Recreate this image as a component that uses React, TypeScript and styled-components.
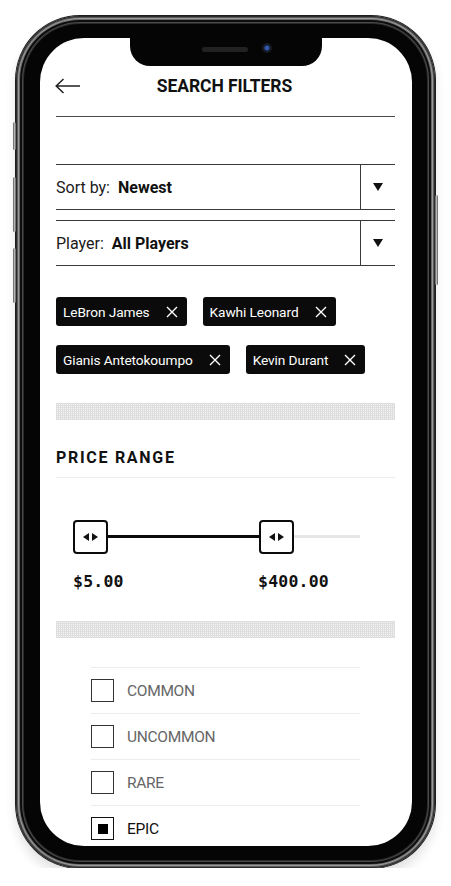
import React from "react";
import styled, { createGlobalStyle } from "styled-components";

const GlobalStyle = createGlobalStyle`
  html, body {
    margin: 0;
    padding: 0;
    background: #ffffff;
  }
  body {
    font-family: Roboto, "Liberation Sans", Arial, sans-serif;
    color: #111;
  }
`;

// Phone frame
const Phone = styled.div`
  position: relative;
  box-sizing: border-box;
  width: 419px;
  height: 852px;
  margin: 16px 0 0 16px;
  padding: 22px 23px 22px 24px;
  border-radius: 64px;
  background: #050505;
  box-shadow: inset 0 0 0 1px #2b2b2b, inset 0 0 0 2px #5a5a5a,
    inset 0 0 0 3px #9a9a9a, inset 0 0 0 4px #6a6a6a, inset 0 0 0 6px #0d0d0d,
    inset 0 0 0 7px #4a4a4a, inset 0 0 0 8px #2a2a2a, 0 0 0 1px #1e1e1e,
    0 8px 12px rgba(0, 0, 0, 0.12);
`;

const SideButton = styled.div<{ $side: "left" | "right"; $top: number; $h: number }>`
  position: absolute;
  ${(p) => (p.$side === "left" ? "left: -3px;" : "right: -3px;")}
  top: ${(p) => p.$top}px;
  width: 3px;
  height: ${(p) => p.$h}px;
  border-radius: 2px;
  background: linear-gradient(90deg, #555, #b5b5b5, #555);
`;

const Screen = styled.div`
  position: relative;
  height: 100%;
  border-radius: 44px;
  background: #fff;
  overflow: hidden;
`;

const Notch = styled.div`
  position: absolute;
  top: 0;
  left: 90px;
  width: 192px;
  height: 28px;
  background: #050505;
  border-radius: 0 0 20px 20px;
  z-index: 2;
`;

const Speaker = styled.div`
  position: absolute;
  top: 9px;
  left: 72px;
  width: 46px;
  height: 5px;
  border-radius: 3px;
  background: #222;
`;

const Camera = styled.div`
  position: absolute;
  top: 5px;
  left: 132px;
  width: 10px;
  height: 10px;
  border-radius: 50%;
  background: radial-gradient(circle at 50% 50%, #3556a8 0 2px, #111a2e 3px, #181818 5px);
`;

const Content = styled.div`
  padding: 0 17px 0 16px;
`;

// Header
const Header = styled.header`
  display: grid;
  grid-template-columns: 1fr auto 1fr;
  align-items: center;
  height: 36px;
  padding: 30px 0 12px;
  border-bottom: 1px solid #4a4a4a;
`;

const BackButton = styled.button`
  justify-self: start;
  display: flex;
  align-items: center;
  padding: 0;
  border: none;
  background: none;
  margin-left: -1px;
`;

const Title = styled.h1`
  margin: 0 0 0 -2px;
  font-size: 17.5px;
  font-weight: 700;
  letter-spacing: -0.1px;
  color: #111;
`;

// Dropdowns
const SelectBox = styled.div<{ $gap: number }>`
  display: flex;
  align-items: stretch;
  height: 44px;
  margin-top: ${(p) => p.$gap}px;
  border-top: 1px solid #3a3a3a;
  border-bottom: 1px solid #3a3a3a;
`;

const SelectLabel = styled.div`
  flex: 1;
  display: flex;
  align-items: center;
  font-size: 16px;
  color: #1a1a1a;
`;

const SelectValue = styled.strong`
  margin-left: 8px;
  font-weight: 700;
  color: #111;
`;

const SelectArrow = styled.div`
  width: 34px;
  display: flex;
  align-items: center;
  justify-content: center;
  border-left: 1px solid #3a3a3a;
`;

// Chips
const ChipList = styled.div`
  display: flex;
  flex-wrap: wrap;
  gap: 19px 16px;
  margin-top: 31px;
`;

const Chip = styled.div`
  display: flex;
  align-items: center;
  gap: 16px;
  height: 29px;
  padding: 0 9px 0 7px;
  border-radius: 3px;
  background: #0b0b0b;
  color: #fff;
  font-size: 13.7px;
  letter-spacing: -0.1px;
`;

// Dotted band
const Band = styled.div<{ $gap: number }>`
  height: 17px;
  margin-top: ${(p) => p.$gap}px;
  background-color: #f4f4f4;
  background-image: linear-gradient(90deg, #dedede 1px, transparent 1px),
    linear-gradient(#dedede 1px, transparent 1px);
  background-size: 2px 2px;
`;

const SectionTitle = styled.h2`
  margin: 28px 0 0;
  padding-bottom: 9px;
  line-height: 20px;
  font-size: 16px;
  font-weight: 700;
  letter-spacing: 1.7px;
  color: #111;
  border-bottom: 1px solid #ececec;
`;

// Slider
const Slider = styled.div`
  margin-top: 42px;
  padding: 0 35px 0 17px;
`;

const Track = styled.div`
  position: relative;
  height: 34px;

  &::before {
    content: "";
    position: absolute;
    left: 0;
    right: 0;
    top: 15px;
    height: 3px;
    background: #e6e6e6;
  }
`;

const TrackFill = styled.div`
  position: absolute;
  top: 15px;
  height: 3px;
  background: #0b0b0b;
`;

const Handle = styled.div`
  position: absolute;
  top: 0;
  box-sizing: border-box;
  width: 35px;
  height: 34px;
  border: 2px solid #0b0b0b;
  border-radius: 4px;
  background: #fff;
  display: flex;
  align-items: center;
  justify-content: center;
`;

const PriceRow = styled.div`
  position: relative;
  height: 20px;
  margin-top: 18px;
`;

const Price = styled.span`
  position: absolute;
  top: 0;
  line-height: 20px;
  font-family: "DejaVu Sans Mono", "Liberation Mono", monospace;
  font-size: 16.5px;
  font-weight: 700;
  letter-spacing: 0.2px;
  color: #111;
`;

// Rarity list
const RarityList = styled.ul`
  list-style: none;
  margin: 29px 35px 0;
  padding: 0;
`;

const RarityRow = styled.li`
  display: flex;
  align-items: center;
  gap: 13px;
  height: 45px;
  border-top: 1px solid #ececec;
`;

const Checkbox = styled.span<{ $checked: boolean }>`
  box-sizing: border-box;
  width: 23px;
  height: 23px;
  border: 1.5px solid ${(p) => (p.$checked ? "#111" : "#333")};
  display: flex;
  align-items: center;
  justify-content: center;

  &::after {
    content: "";
    width: 10px;
    height: 10px;
    background: ${(p) => (p.$checked ? "#000" : "transparent")};
  }
`;

const RarityLabel = styled.span<{ $checked: boolean }>`
  font-size: 15.5px;
  letter-spacing: -0.3px;
  color: ${(p) => (p.$checked ? "#111" : "#666")};
`;

const BackArrow = () => (
  <svg width="26" height="16" viewBox="0 0 26 16">
    <path d="M1 8h24M8.5 1 1.2 8l7.3 7" fill="none" stroke="#222" strokeWidth="1.5" />
  </svg>
);

const DownTriangle = () => (
  <svg width="10" height="8" viewBox="0 0 10 8">
    <path d="M0 0h10L5 8z" fill="#111" />
  </svg>
);

const CloseIcon = () => (
  <svg width="12" height="12" viewBox="0 0 12 12">
    <path d="M1 1l10 10M11 1 1 11" stroke="#fff" strokeWidth="1.4" fill="none" />
  </svg>
);

const HandleArrows = () => (
  <svg width="15" height="8" viewBox="0 0 15 8">
    <path d="M6 0v8L0 4zM9 0v8l6-4z" fill="#111" />
  </svg>
);

const players = ["LeBron James", "Kawhi Leonard", "Gianis Antetokoumpo", "Kevin Durant"];

const rarities = [
  { name: "COMMON", checked: false },
  { name: "UNCOMMON", checked: false },
  { name: "RARE", checked: false },
  { name: "EPIC", checked: true },
];

// slider geometry
const TRACK_WIDTH = 287;
const HANDLE_WIDTH = 35;
const PRICE_MIN = 5;
const PRICE_MAX = 540;
const priceLow = 5;
const priceHigh = 400;

const toLeft = (value: number) =>
  ((value - PRICE_MIN) / (PRICE_MAX - PRICE_MIN)) * (TRACK_WIDTH - HANDLE_WIDTH);

const App: React.FC = () => {
  const lowLeft = toLeft(priceLow);
  const highLeft = toLeft(priceHigh);

  return (
    <>
      <GlobalStyle />
      <Phone>
        <SideButton $side="left" $top={106} $h={28} />
        <SideButton $side="left" $top={161} $h={55} />
        <SideButton $side="left" $top={232} $h={55} />
        <SideButton $side="right" $top={179} $h={90} />
        <Screen>
          <Notch>
            <Speaker />
            <Camera />
          </Notch>
          <Content>
            <Header>
              <BackButton aria-label="Back">
                <BackArrow />
              </BackButton>
              <Title>SEARCH FILTERS</Title>
              <span />
            </Header>

            <SelectBox $gap={47}>
              <SelectLabel>
                Sort by:<SelectValue>Newest</SelectValue>
              </SelectLabel>
              <SelectArrow>
                <DownTriangle />
              </SelectArrow>
            </SelectBox>
            <SelectBox $gap={10}>
              <SelectLabel>
                Player:<SelectValue>All Players</SelectValue>
              </SelectLabel>
              <SelectArrow>
                <DownTriangle />
              </SelectArrow>
            </SelectBox>

            <ChipList>
              {players.map((name) => (
                <Chip key={name}>
                  {name}
                  <CloseIcon />
                </Chip>
              ))}
            </ChipList>

            <Band $gap={29} />

            <SectionTitle>PRICE RANGE</SectionTitle>

            <Slider>
              <Track>
                <TrackFill
                  style={{ left: lowLeft + HANDLE_WIDTH / 2, width: highLeft - lowLeft }}
                />
                <Handle style={{ left: lowLeft }}>
                  <HandleArrows />
                </Handle>
                <Handle style={{ left: highLeft }}>
                  <HandleArrows />
                </Handle>
              </Track>
              <PriceRow>
                <Price style={{ left: lowLeft }}>${priceLow.toFixed(2)}</Price>
                <Price style={{ left: highLeft - 1 }}>${priceHigh.toFixed(2)}</Price>
              </PriceRow>
            </Slider>

            <Band $gap={29} />

            <RarityList>
              {rarities.map((r) => (
                <RarityRow key={r.name}>
                  <Checkbox $checked={r.checked} />
                  <RarityLabel $checked={r.checked}>{r.name}</RarityLabel>
                </RarityRow>
              ))}
            </RarityList>
          </Content>
        </Screen>
      </Phone>
    </>
  );
};

export default App;
